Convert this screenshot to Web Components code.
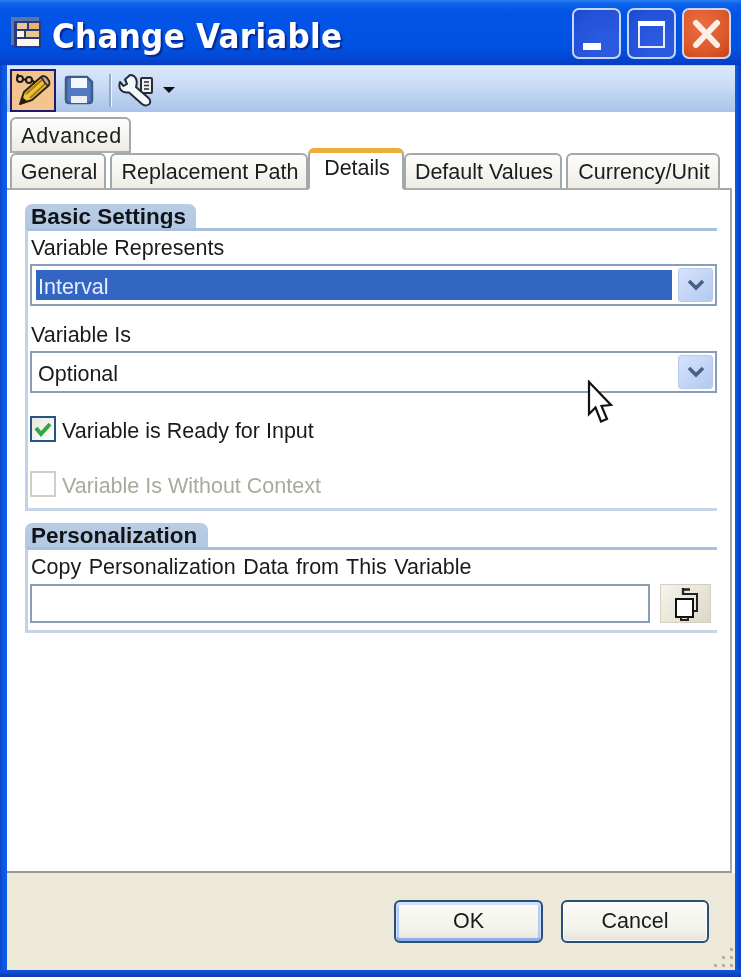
<!DOCTYPE html>
<html lang="en"><head><meta charset="utf-8"><title>Change Variable</title>
<style>
html,body{margin:0;padding:0;background:#0a4fd8;}
body{font-family:"Liberation Sans",Arial,sans-serif;font-size:21.5px;color:#1a1a1a;}
</style></head><body>
<xp-window>
  <xp-titlebar slot="title" label="Change Variable"></xp-titlebar>
  <xp-toolbar slot="toolbar">
    <xp-toolbtn active>
      <svg width="42" height="39" viewBox="0 0 42 39">
        <path d="M8 33 L12 21 L29 6 Q32 4 35 7 L37 10 Q38 13 36 15 L20 29 Z" fill="#f2c438" stroke="#2a2418" stroke-width="2" stroke-linejoin="round"/>
        <path d="M14 23 L31 8 M18 27 L34 12" stroke="#a9781c" stroke-width="2" fill="none"/>
        <path d="M29 6 Q32 4 35 7 L37 10 Q38 13 36 15 L33 12 Z" fill="#c9a3a0" stroke="#2a2418" stroke-width="1.5"/>
        <path d="M8 33 L10 26 L15 30 Z" fill="#1e1a14"/>
        <circle cx="8" cy="8" r="3" fill="none" stroke="#1c1c1c" stroke-width="2"/>
        <circle cx="17" cy="9" r="3" fill="none" stroke="#1c1c1c" stroke-width="2"/>
        <path d="M5 7 L6 3 M11 8 L14 9 M20 9 L23 12" stroke="#1c1c1c" stroke-width="2" fill="none"/>
      </svg>
    </xp-toolbtn>
    <xp-toolbtn>
      <svg width="30" height="30" viewBox="0 0 30 30">
        <path d="M4 2 H23 L28 7 V25 Q28 28 25 28 H5 Q2 28 2 25 V4 Q2 2 4 2Z" fill="#5079c2" stroke="#3f5c88" stroke-width="2.5"/>
        <rect x="7" y="3" width="16" height="10" fill="#f4f7fb"/>
        <rect x="7" y="21" width="16" height="7" fill="#eef0f4"/>
      </svg>
    </xp-toolbtn>
    <xp-toolsep></xp-toolsep>
    <xp-toolbtn style="width:36px;margin-left:6px">
      <svg width="36" height="34" viewBox="0 0 36 34">
        <rect x="23" y="5" width="11" height="15" rx="1" fill="#eef0f2" stroke="#2a2f36" stroke-width="2"/>
        <path d="M26 9 H31 M26 12.500 H31 M26 16 H31" stroke="#2a2f36" stroke-width="1.600"/>
        <path d="M12 2 L7 6.500 L9 11 L5.500 13 L2 9 C0 15 3 19.500 9 19.500 L11 19.500 L24 31 C26.500 33 31 33 32 30 C33 27 31 25.500 30 24.500 L18 14 C20 8 18 2 12 2Z" fill="#f5f7fa" stroke="#1f2a3a" stroke-width="2" stroke-linejoin="round"/>
      </svg>
    </xp-toolbtn>
    <xp-caret></xp-caret>
  </xp-toolbar>

  <xp-tabstrip>
    <xp-tab-row><xp-tab style="width:121px;letter-spacing:.6px">Advanced</xp-tab></xp-tab-row>
    <xp-tab-row>
      <xp-tab style="width:96px;margin-right:4px">General</xp-tab>
      <xp-tab style="width:198px">Replacement Path</xp-tab>
      <xp-tab active style="width:96px">Details</xp-tab>
      <xp-tab style="width:158px;margin-right:4px">Default Values</xp-tab>
      <xp-tab style="width:154px">Currency/Unit</xp-tab>
    </xp-tab-row>
  </xp-tabstrip>

  <xp-panel>
    <xp-group heading="Basic Settings" tabwidth="171">
      <xp-label>Variable Represents</xp-label>
      <xp-combo selected>Interval</xp-combo>
      <xp-label style="margin-top:12px">Variable Is</xp-label>
      <xp-combo>Optional</xp-combo>
      <xp-check checked style="margin-top:23px">Variable is Ready for Input</xp-check>
      <xp-check disabled style="margin-top:29px;margin-bottom:11px">Variable Is Without Context</xp-check>
    </xp-group>
    <xp-group heading="Personalization" tabwidth="183" style="margin-top:12px">
      <xp-label style="word-spacing:1.5px;height:34px">Copy Personalization Data from This Variable</xp-label>
      <xp-picker></xp-picker>
    </xp-group>
  </xp-panel>

  <xp-footer slot="footer">
    <xp-button default>OK</xp-button>
    <xp-button>Cancel</xp-button>
  </xp-footer>
</xp-window>

<script>
function def(name, css, html, extra){
  const tpl=document.createElement('template');
  tpl.innerHTML='<style>'+css+'</style>'+html;
  customElements.define(name, class extends HTMLElement{
    constructor(){super();this.attachShadow({mode:'open'}).appendChild(tpl.content.cloneNode(true));}
    connectedCallback(){ if(extra) extra(this,this.shadowRoot); }
  });
}
def('xp-window',`
:host{display:flex;flex-direction:column;position:relative;width:741px;height:977px;box-sizing:border-box;filter:blur(.35px);
 background:linear-gradient(90deg,#0a47c8 0,#0d56e4 3px,#0d5cec 6px,#0d5cec 735px,#0a4ed8 738px,#0a3fb8 741px);overflow:hidden}
.client{flex:1;display:flex;flex-direction:column;margin:0 6px 7px 7px;background:#fff;min-height:0}
.main{flex:1;display:flex;flex-direction:column;min-height:0;background:#fff}
.bottom{position:absolute;left:0;right:0;bottom:0;height:7px;background:linear-gradient(#0d54e0,#0a3cb0)}
.cursor{position:absolute;left:586px;top:380px}
`,`<slot name="title"></slot><div class="client"><slot name="toolbar"></slot><div class="main"><slot></slot></div><slot name="footer"></slot></div>
<div class="bottom"></div>
<svg class="cursor" width="28" height="46" viewBox="0 0 28 46"><path d="M3 2 V34 L9.500 27.500 L15 41.500 L21 39 L15.500 26 L25 25 Z" fill="#fff" stroke="#111" stroke-width="2.2" stroke-linejoin="miter"/></svg>`);

def('xp-titlebar',`
:host{display:flex;align-items:center;height:65px;flex:none;box-sizing:border-box;padding:0 10px 0 11px;
 background:linear-gradient(#2a80f0 0,#0a60ea 4px,#0353e6 14px,#0054e6 30px,#0050e0 50px,#0444d0 60px,#0a3cc0 65px)}
.icon{flex:none;width:32px;height:32px;margin-top:1px}
.text{margin-left:9px;font:bold 34.5px "DejaVu Sans Condensed","DejaVu Sans",Verdana,sans-serif;letter-spacing:.3px;color:#fff;text-shadow:2px 2px 1px #0a2a90;flex:1;white-space:nowrap;margin-top:6px}
.btns{display:flex;gap:6px}
.b{width:49px;height:51px;box-sizing:border-box;border:2px solid #c6d6f6;border-radius:7px;display:flex;position:relative;
 background:radial-gradient(circle at 75% 78%,#2c5be0 0,#2a5ae0 25%,#2452da 70%,#1a48cc 100%);margin-top:1px}
.b.x{background:radial-gradient(circle at 40% 35%,#ea6e44,#dc5a2a 60%,#c8401a)}
svg{display:block}
`,`<svg class="icon" viewBox="0 0 32 32"><rect x="0" y="0" width="28" height="28" fill="#6f7a96" opacity=".85"/><rect x="3" y="4" width="27" height="27" fill="#2a3a80"/>
<rect x="6" y="6" width="10" height="6" fill="#e9c88f"/><rect x="18" y="6" width="10" height="6" fill="#e8b36b"/><rect x="6" y="14" width="7" height="6" fill="#fff4df"/><rect x="15" y="14" width="13" height="6" fill="#e9c88f"/><rect x="6" y="22" width="22" height="7" fill="#fdf8ec"/></svg>
<span class="text"></span>
<div class="btns">
 <div class="b"><svg width="45" height="47" viewBox="0 0 45 47"><rect x="9" y="33" width="18" height="7" fill="#fff"/></svg></div>
 <div class="b"><svg width="45" height="47" viewBox="0 0 45 47"><path d="M10 12 H35 V37 H10Z" fill="none" stroke="#e6eefc" stroke-width="2"/><rect x="9" y="11" width="27" height="5" fill="#fff"/></svg></div>
 <div class="b x"><svg width="45" height="47" viewBox="0 0 45 47"><path d="M12 13 L33 35 M33 13 L12 35" stroke="#fbeee6" stroke-width="6" stroke-linecap="round"/></svg></div>
</div>`,(el,s)=>{s.querySelector('.text').textContent=el.getAttribute('label')});

def('xp-toolbar',`
:host{display:flex;align-items:center;height:47px;flex:none;box-sizing:border-box;padding:2px 0 0 3px;
 border-top:1px solid #b9d0f4;background:linear-gradient(#dce8fa 0,#cbdcf5 40%,#a9c3e8 100%)}
`,`<slot></slot>`);
def('xp-toolbtn',`
:host{display:flex;align-items:center;justify-content:center;flex:none;box-sizing:border-box;height:43px;width:30px;margin-left:8px}
:host([active]){width:46px;margin-left:0;background:#f5c48c;border:2px solid #1f1a70}
`,`<slot></slot>`);
def('xp-toolsep',`:host{display:block;flex:none;width:2px;height:33px;background:#93a9c8;border-right:1px solid #eef4fc;margin:0 0 0 15px}`,``);
def('xp-caret',`:host{display:block;flex:none;width:0;height:0;border:6px solid transparent;border-top:6px solid #111;border-bottom:0;margin-left:9px}`,``);

def('xp-tabstrip',`:host{display:flex;flex-direction:column;flex:none;padding:5px 0 0 3px;position:relative;z-index:1;margin-bottom:-2px}`,`<slot></slot>`);
def('xp-tab-row',`:host{display:flex;align-items:flex-end;height:37px}:host(:first-child){height:36px}`,`<slot></slot>`);
def('xp-tab',`
:host{display:flex;align-items:center;justify-content:center;box-sizing:border-box;height:100%;flex:none;white-space:nowrap;
 border:2px solid #a3a8a8;border-bottom:2px solid #a9adad;border-radius:6px 6px 0 0;background:linear-gradient(#fdfdfc,#eeece4);color:#1c1c1c;padding:2px 0 0 2px}
:host([active]){height:42px;margin-top:-5px;background:#fff;border-color:#a3a8a8;border-top:5px solid #efae3a;border-bottom:2px solid #fff;padding:0 0 4px 2px}
`,`<slot></slot>`);
def('xp-panel',`
:host{display:flex;flex-direction:column;flex:1;box-sizing:border-box;min-height:0;margin-right:3px;
 padding:14px 13px 0 18px;border-top:2px solid #a3a8a8;border-right:2px solid #a3a8a8;border-bottom:2px solid #9a9a92;background:#fff}
`,`<slot></slot>`);
def('xp-group',`
:host{display:flex;flex-direction:column;flex:none}
.head{box-sizing:border-box;height:24px;background:linear-gradient(#b9cce4,#b3c8e2);border-radius:7px 7px 0 0;font-weight:bold;color:#101418;font-size:22.5px;line-height:26px;padding-left:6px;white-space:nowrap}
.body{border-top:3px solid #a9c0dc;border-left:3px solid #c0d1e8;border-bottom:3px solid #c6d4e8;padding:0 0 0 2px;display:flex;flex-direction:column}
`,`<div class="head"></div><div class="body"><slot></slot></div>`,(el,s)=>{const h=s.querySelector('.head');h.textContent=el.getAttribute('heading');h.style.width=el.getAttribute('tabwidth')+'px'});
def('xp-label',`:host{display:block;height:33px;line-height:35px;padding-left:1px;white-space:nowrap}`,`<slot></slot>`);
def('xp-combo',`
:host{display:flex;align-items:center;box-sizing:border-box;height:42px;border:2px solid #8a9fb6;padding:0 2px 0 4px;background:#fff}
.v{flex:1;height:30px;line-height:34px;padding-left:2px;margin-right:6px}
:host([selected]) .v{background:#3366c2;color:#e6eeff}
.btn{flex:none;width:35px;height:34px;box-sizing:border-box;border-radius:3px;border:1px solid #b6c9ea;background:linear-gradient(135deg,#d6e3fb,#b3c9f2);display:flex;align-items:center;justify-content:center}
`,`<div class="v"><slot></slot></div><div class="btn"><svg width="18" height="12" viewBox="0 0 18 12"><path d="M2 2 L9 9 L16 2" fill="none" stroke="#4a5f86" stroke-width="3.5"/></svg></div>`);
def('xp-check',`
:host{display:flex;align-items:center;height:26px;white-space:nowrap}
.box{flex:none;width:26px;height:26px;box-sizing:border-box;border:2px solid #255480;background:linear-gradient(135deg,#e8e6dc,#fff);margin-right:6px;display:flex;align-items:center;justify-content:center}
.t{line-height:30px;height:26px}
:host([disabled]){color:#aaa99d}
:host([disabled]) .box{border-color:#cfcfc4;background:#fff}
:host([disabled]) svg{display:none}
`,`<div class="box"><svg width="18" height="16" viewBox="0 0 18 16"><path d="M2 7 L7 13 L16 3" fill="none" stroke="#2fa83c" stroke-width="4"/></svg></div><span class="t"><slot></slot></span>`);
def('xp-picker',`
:host{display:flex;gap:10px;height:39px;padding:0 6px 7px 0}
.i{flex:1;border:2px solid #8a9fb6;background:#fff;box-sizing:border-box}
.b{flex:none;width:51px;box-sizing:border-box;border:1px solid #d4cfc0;background:linear-gradient(135deg,#f6f4ec,#dcd8c8);display:flex;align-items:center;justify-content:center}
`,`<div class="i"></div><div class="b"><svg width="28" height="34" viewBox="0 0 28 34"><path d="M10 7 H25 V24 H20" fill="#e9e7dc" stroke="#222" stroke-width="2"/><path d="M11 1 V8 M11 2.500 H18" stroke="#222" stroke-width="2.4" fill="none"/><rect x="4" y="12" width="17" height="18" fill="#fff" stroke="#111" stroke-width="2"/><path d="M9 30 V33 M16 30 V33 M8 33 H17" stroke="#222" stroke-width="2"/></svg></div>`);
def('xp-footer',`
:host{display:flex;justify-content:flex-end;align-items:flex-start;gap:18px;flex:none;height:97px;box-sizing:border-box;padding:27px 26px 0 0;background:#ece9d8;position:relative}
svg{position:absolute;right:0;bottom:0}
`,`<slot></slot><svg width="24" height="24" viewBox="0 0 24 24" fill="#b5b2a0"><rect x="19" y="2" width="3" height="3"/><rect x="19" y="10" width="3" height="3"/><rect x="11" y="10" width="3" height="3"/><rect x="19" y="18" width="3" height="3"/><rect x="11" y="18" width="3" height="3"/><rect x="3" y="18" width="3" height="3"/></svg>`);
def('xp-button',`
:host{display:flex;align-items:center;justify-content:center;box-sizing:border-box;width:148px;height:43px;border:2px solid #2a4f78;border-radius:6px;
 background:linear-gradient(#fbfbf8,#f3f2ea 70%,#e6e3d6);color:#1a1a1a;box-shadow:inset 0 0 0 1px #fff}
:host([default]){width:149px;box-shadow:inset 0 2px 0 1px #cfe0fd,inset 0 -2px 0 1px #8cb0e8,inset 2px 0 0 1px #b4ccf4,inset -2px 0 0 1px #b4ccf4}
`,`<slot></slot>`);
</script>
</body></html>
